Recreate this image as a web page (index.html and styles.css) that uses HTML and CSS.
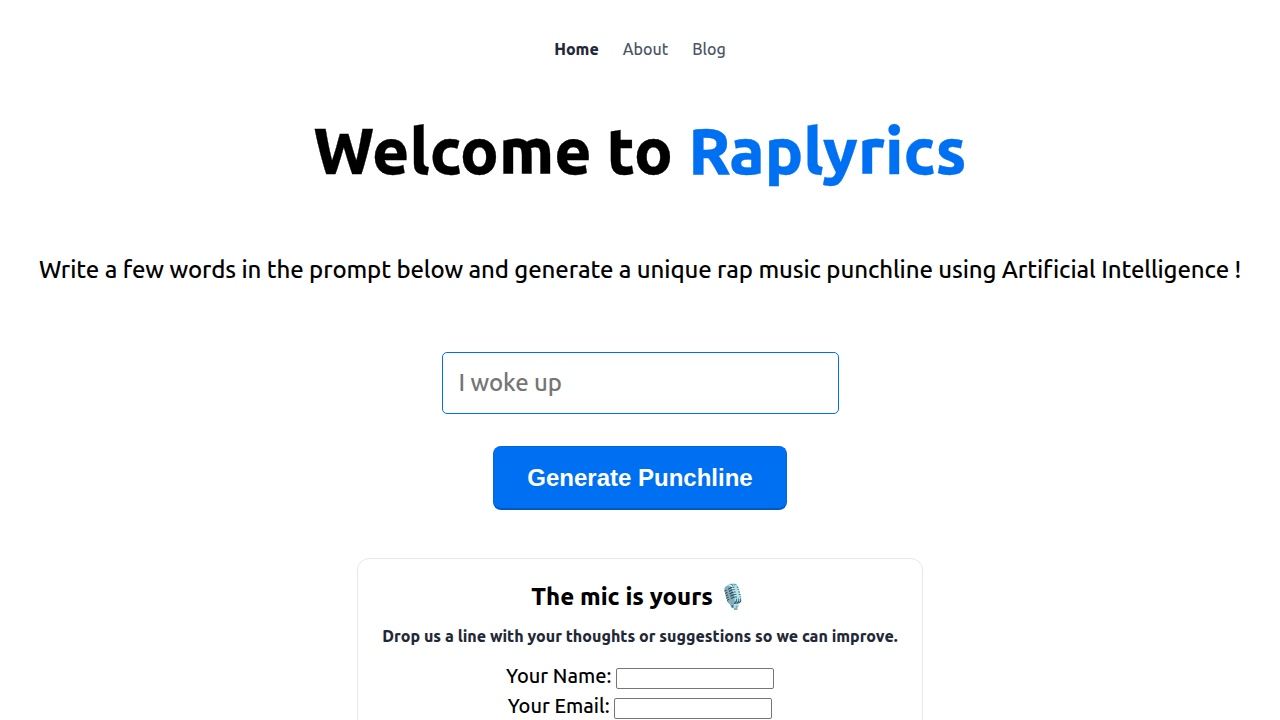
FILE: index.html
```html
<!DOCTYPE html>
<html lang="en">
<head>
<meta charset="utf-8">
<title>Raplyrics</title>
<link rel="stylesheet" href="styles.css">
</head>
<body>
<nav class="nav">
  <a class="nav-link active" href="#">Home</a>
  <a class="nav-link" href="#">About</a>
  <a class="nav-link" href="#">Blog</a>
</nav>
<main class="main">
  <h1 class="title">Welcome to <span class="brand">Raplyrics</span></h1>
  <p class="lead">Write a few words in the prompt below and generate a unique rap music punchline using Artificial Intelligence !</p>
  <input class="prompt" type="text" placeholder="I woke up">
  <button class="generate" type="button">Generate Punchline</button>
  <section class="card">
    <h2 class="card-title">The mic is yours <span class="mic">🎙️</span></h2>
    <p class="card-sub">Drop us a line with your thoughts or suggestions so we can improve.</p>
    <form class="form">
      <label class="field">Your Name: <input class="small-input" type="text"></label>
      <label class="field">Your Email: <input class="small-input" type="text"></label>
    </form>
  </section>
</main>
</body>
</html>
```
FILE: styles.css
```css
* { box-sizing: border-box; }
html, body { margin: 0; height: 720px; overflow: hidden; background: #fff; }
body { font-family: Ubuntu, "Noto Sans", "Open Sans", sans-serif; font-weight: 500; color: #000; }
.nav { display: flex; justify-content: center; gap: 24px; padding-top: 38px; height: 60px; font-size: 16px; line-height: 22px; }
.nav-link { color: #4b5563; text-decoration: none; }
.nav-link.active { color: #1f2937; font-weight: 800; }
.main { display: flex; flex-direction: column; align-items: center; }
.title { margin: 54px 0 0; font-size: 64px; line-height: 72px; font-weight: 800; color: #000; -webkit-text-stroke: 0.3px currentColor; }
.brand { color: #0070f3; }
.lead { margin: 68px 0 0; font-size: 24px; line-height: 32px; letter-spacing: -0.11px; white-space: nowrap; }
.prompt { margin-top: 66px; width: 397px; height: 62px; padding: 0 16px 2px; font: 500 24px Ubuntu, "Noto Sans", sans-serif; letter-spacing: -0.1px; border: 1px solid #0070f3; border-radius: 5px; outline: 0; }
.prompt::placeholder { color: #757575; }
.generate { margin-top: 32px; width: 294px; height: 64px; padding: 1px 0 0; background: #0070f3; color: #fff; font: 700 24px "Liberation Sans", Arial, sans-serif; border: 1px solid #0067df; border-bottom: 2px solid #0058c0; border-radius: 8px; }
.card { margin-top: 48px; width: 566px; height: 240px; padding: 20px 24px; border: 1px solid #e5e7eb; border-radius: 12px; text-align: center; }
.card-title { margin: 0; font-size: 24px; line-height: 36px; font-weight: 800; }
.mic { font-family: "Noto Color Emoji", sans-serif; }
.card-sub { margin: 9px 0 0; font-size: 16px; line-height: 24px; font-weight: 800; color: #1f2937; }
.form { margin-top: 13px; display: flex; flex-direction: column; align-items: center; }
.field { font-size: 20px; line-height: 30px; }
.small-input { width: 158px; height: 21px; border: 1px solid #767676; border-radius: 2px; padding: 1px 2px; }
```
